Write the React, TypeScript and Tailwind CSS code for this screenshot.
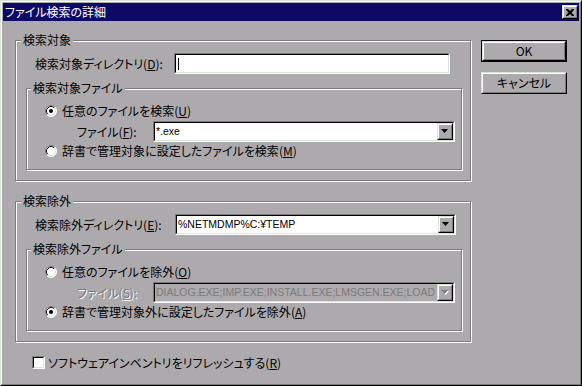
import React from "react";

const FONT = "[font-family:'Noto_Sans_CJK_JP',sans-serif] [font-feature-settings:'palt']";

function K({ k }: { k: string }) {
  return (
    <>
      (<span className="underline underline-offset-[1px] decoration-1">{k}</span>)
    </>
  );
}

function Arrow({ disabled }: { disabled?: boolean }) {
  return (
    <svg width="8" height="5" viewBox="0 0 8 5">
      {disabled && <polygon points="1,1 8,1 4.5,5" fill="#ffffff" />}
      <polygon points="0,0 7,0 3.5,4" fill={disabled ? "#7b7b7b" : "#000000"} />
    </svg>
  );
}

function DropBtn({ disabled }: { disabled?: boolean }) {
  return (
    <div className="ml-auto w-[16px] h-full border border-t-[#d8e4d8] border-l-[#d8e4d8] border-r-black border-b-black">
      <div className="h-full border border-t-white border-l-white border-r-[#7b7b7b] border-b-[#7b7b7b] bg-[#adaaad] flex items-center justify-center">
        <Arrow disabled={disabled} />
      </div>
    </div>
  );
}

function Field({
  className,
  disabled,
  dropdown,
  children,
}: {
  className: string;
  disabled?: boolean;
  dropdown?: boolean;
  children?: React.ReactNode;
}) {
  return (
    <div className={`h-[21px] border border-t-[#7b7b7b] border-l-[#7b7b7b] border-r-white border-b-white ${className}`}>
      <div
        className={`h-full border border-t-black border-l-black border-r-[#d8e4d8] border-b-[#d8e4d8] flex items-center ${
          disabled ? "bg-[#adaaad]" : "bg-white"
        }`}
      >
        <div
          className={`flex-1 overflow-hidden whitespace-nowrap pl-[1px] [font-family:'Liberation_Sans',sans-serif] text-[10.5px] leading-[13px] ${
            disabled ? "text-[#7b7b7b]" : "text-black"
          }`}
        >
          {children}
        </div>
        {dropdown && <DropBtn disabled={disabled} />}
      </div>
    </div>
  );
}

function Radio({ checked }: { checked?: boolean }) {
  return (
    <svg width="12" height="12" viewBox="0 0 12 12" className="shrink-0">
      <circle cx="6" cy="6" r="5.5" fill="#ffffff" />
      <path d="M2.11 9.89 A5.5 5.5 0 0 1 9.89 2.11" fill="none" stroke="#7b7b7b" strokeWidth="1" />
      <path d="M9.89 2.11 A5.5 5.5 0 0 1 2.11 9.89" fill="none" stroke="#ffffff" strokeWidth="1" />
      <path d="M2.82 9.18 A4.5 4.5 0 0 1 9.18 2.82" fill="none" stroke="#000000" strokeWidth="1" />
      <path d="M9.18 2.82 A4.5 4.5 0 0 1 2.82 9.18" fill="none" stroke="#d8e4d8" strokeWidth="1" />
      {checked && <circle cx="6" cy="6" r="2" fill="#000000" />}
    </svg>
  );
}

function Group({
  label,
  className,
  labelLeft,
  children,
}: {
  label: string;
  className: string;
  labelLeft: string;
  children?: React.ReactNode;
}) {
  return (
    <div
      className={`relative border border-[#7b7b7b] shadow-[inset_1px_1px_0_#ffffff,1px_1px_0_#ffffff] flex flex-col ${className}`}
    >
      <span className={`absolute -top-[8px] ${labelLeft} px-[2px] bg-[#adaaad] leading-[14px] whitespace-nowrap`}>
        {label}
      </span>
      {children}
    </div>
  );
}

function RadioRow({ checked, children, className }: { checked?: boolean; children: React.ReactNode; className: string }) {
  return (
    <div className={`h-[16px] flex items-center pl-[18px] ${className}`}>
      <Radio checked={checked} />
      <span className="ml-[5px] whitespace-nowrap">{children}</span>
    </div>
  );
}

function Button({ def, children, className }: { def?: boolean; children: React.ReactNode; className: string }) {
  if (def) {
    return (
      <div className={`w-[86px] h-[22px] border border-black ${className}`}>
        <div className="h-full border border-t-[#d8e4d8] border-l-[#d8e4d8] border-r-black border-b-black">
          <div className="h-full border border-t-white border-l-white border-r-[#7b7b7b] border-b-[#7b7b7b] flex items-center justify-center">
            {children}
          </div>
        </div>
      </div>
    );
  }
  return (
    <div className={`w-[86px] h-[22px] border border-t-[#d8e4d8] border-l-[#d8e4d8] border-r-black border-b-black ${className}`}>
      <div className="h-full border border-t-white border-l-white border-r-[#7b7b7b] border-b-[#7b7b7b] flex items-center justify-center">
        {children}
      </div>
    </div>
  );
}

export default function App() {
  return (
    <div
      className={`w-[582px] h-[386px] border border-t-[#d8e4d8] border-l-[#d8e4d8] border-r-black border-b-black ${FONT} text-[12px] leading-[14px] text-black`}
    >
      <div className="h-full border border-t-white border-l-white border-r-[#7b7b7b] border-b-[#7b7b7b] bg-[#adaaad] p-px flex flex-col">
        {/* Title bar */}
        <div className="h-[18px] bg-[#0c0a64] flex items-center pl-[2px] pr-[1px]">
          <span className="text-white whitespace-nowrap">ファイル検索の詳細</span>
          <div className="ml-auto w-[16px] h-[14px] border border-t-[#d8e4d8] border-l-[#d8e4d8] border-r-black border-b-black">
            <div className="h-full border border-t-white border-l-white border-r-[#7b7b7b] border-b-[#7b7b7b] bg-[#adaaad] flex items-center justify-center">
              <svg width="8" height="7" viewBox="0 0 8 7">
                <path d="M0 0h2l2 2 2-2h2v1l-2.5 2.5L8 6v1H6L4 5 2 7H0V6l2.5-2.5L0 1z" fill="#000000" />
              </svg>
            </div>
          </div>
        </div>

        {/* Body */}
        <div className="flex pl-[12px] pt-[19px]">
          <div className="w-[456px] flex flex-col">
            {/* Group 1 */}
            <Group label="検索対象" className="h-[141px]" labelLeft="left-[5px]">
              <div className="mt-[12px] h-[21px] flex items-center pl-[19px]">
                <span className="w-[139px] whitespace-nowrap">
                  検索対象ディレクトリ<K k="D" />:
                </span>
                <Field className="w-[276px]">
                  <span className="inline-block w-px h-[12px] bg-black align-middle ml-[1px]" />
                </Field>
              </div>
              <Group label="検索対象ファイル" className="mt-[14px] ml-[10px] w-[436px] h-[82px]" labelLeft="left-[4px]">
                <RadioRow checked className="mt-[14px]">
                  任意のファイルを検索<K k="U" />
                </RadioRow>
                <div className="mt-[2px] h-[21px] flex items-center pl-[50px]">
                  <span className="w-[76px] whitespace-nowrap">
                    ファイル<K k="F" />:
                  </span>
                  <Field className="w-[302px]" dropdown>
                    *.exe
                  </Field>
                </div>
                <RadioRow className="mt-[1px]">
                  辞書で管理対象に設定したファイルを検索<K k="M" />
                </RadioRow>
              </Group>
            </Group>

            {/* Group 2 */}
            <Group label="検索除外" className="mt-[20px] h-[141px]" labelLeft="left-[5px]">
              <div className="mt-[12px] h-[21px] flex items-center pl-[19px]">
                <span className="w-[140px] whitespace-nowrap">
                  検索除外ディレクトリ<K k="E" />:
                </span>
                <Field className="w-[281px]" dropdown>
                  %NETMDMP%C:¥TEMP
                </Field>
              </div>
              <Group label="検索除外ファイル" className="mt-[14px] ml-[10px] w-[436px] h-[82px]" labelLeft="left-[4px]">
                <RadioRow className="mt-[14px]">
                  任意のファイルを除外<K k="O" />
                </RadioRow>
                <div className="mt-[2px] h-[21px] flex items-center pl-[50px]">
                  <span className="w-[76px] whitespace-nowrap text-[#7b7b7b] [text-shadow:1px_1px_0_#ffffff]">
                    ファイル<K k="S" />:
                  </span>
                  <Field className="w-[302px]" dropdown disabled>
                    DIALOG.EXE;IMP.EXE;INSTALL.EXE;LMSGEN.EXE;LOAD
                  </Field>
                </div>
                <RadioRow checked className="mt-[1px]">
                  辞書で管理対象外に設定したファイルを除外<K k="A" />
                </RadioRow>
              </Group>
            </Group>

            {/* Checkbox */}
            <div className="mt-[14px] h-[13px] flex items-center pl-[17px]">
              <div className="w-[13px] h-[13px] border border-t-[#7b7b7b] border-l-[#7b7b7b] border-r-white border-b-white">
                <div className="h-full border border-t-black border-l-black border-r-[#d8e4d8] border-b-[#d8e4d8] bg-white" />
              </div>
              <span className="ml-[3px] whitespace-nowrap">
                ソフトウェアインベントリをリフレッシュする<K k="R" />
              </span>
            </div>
          </div>

          {/* Buttons */}
          <div className="ml-[10px] flex flex-col">
            <Button def className="">
              OK
            </Button>
            <Button className="mt-[10px]">キャンセル</Button>
          </div>
        </div>
      </div>
    </div>
  );
}
